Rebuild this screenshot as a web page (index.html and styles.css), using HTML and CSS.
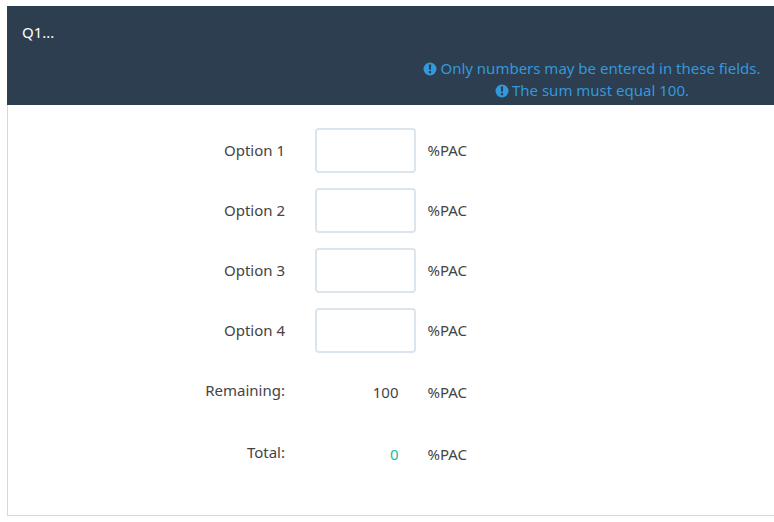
FILE: index.html
```html
<!DOCTYPE html>
<html lang="en">
<head>
<meta charset="utf-8">
<title>Question</title>
<link rel="stylesheet" href="styles.css">
</head>
<body>
<section class="question">
  <header class="head">
    <div class="title">Q1...</div>
    <div class="tips">
      <div class="tip"><svg class="icon" viewBox="0 0 14 14"><circle cx="7" cy="7" r="6.5"/><path d="M5.8 2.4h2.4l-.3 5.4H6.1zM5.9 9h2.2v2.3H5.9z"/></svg>Only numbers may be entered in these fields.</div>
      <div class="tip"><svg class="icon" viewBox="0 0 14 14"><circle cx="7" cy="7" r="6.5"/><path d="M5.8 2.4h2.4l-.3 5.4H6.1zM5.9 9h2.2v2.3H5.9z"/></svg>The sum must equal 100.</div>
    </div>
  </header>
  <div class="answers">
    <div class="row"><label class="label" for="a1">Option 1</label><input class="field" id="a1" type="text"><span class="unit">%PAC</span></div>
    <div class="row"><label class="label" for="a2">Option 2</label><input class="field" id="a2" type="text"><span class="unit">%PAC</span></div>
    <div class="row"><label class="label" for="a3">Option 3</label><input class="field" id="a3" type="text"><span class="unit">%PAC</span></div>
    <div class="row"><label class="label" for="a4">Option 4</label><input class="field" id="a4" type="text"><span class="unit">%PAC</span></div>
    <div class="row sum"><span class="label">Remaining:</span><span class="value">100</span><span class="unit">%PAC</span></div>
    <div class="row sum"><span class="label">Total:</span><span class="value good">0</span><span class="unit">%PAC</span></div>
  </div>
</section>
</body>
</html>
```
FILE: styles.css
```css
* { box-sizing: border-box; }
body {
  margin: 0;
  background: #fff;
  color: #444;
  font: 15px/22px "Noto Sans", sans-serif;
  overflow: hidden;
}
.question {
  margin: 6px 0 0 7px;
  height: 510px;
  border: solid #d8d8d8;
  border-width: 0 0 1px 1px;
}
.head {
  height: 99px;
  margin-left: -1px;
  padding: 15px 13px 0 15px;
  background: #2d3e50;
  color: #fff;
}
.tips {
  width: 338px;
  margin: 14px 0 0 auto;
  color: #3498db;
  text-align: center;
  white-space: nowrap;
}
.tip { display: flex; justify-content: center; align-items: center; }
.icon { width: 14px; height: 14px; margin: 1px 3px 0 0; }
.icon circle { fill: #3498db; }
.icon path { fill: #2d3e50; }
.answers { padding-top: 23px; }
.row {
  display: grid;
  grid-template-columns: 277px 101px 100px;
  align-items: center;
  height: 45px;
  margin-bottom: 15px;
}
.label { text-align: right; }
.field {
  width: 101px;
  height: 45px;
  margin-left: 30px;
  border: 2px solid #dce4ec;
  border-radius: 4px;
  background: #fff;
  font: inherit;
}
.label, .unit, .value { padding-bottom: 2px; }
.unit { margin-left: 41.5px; }
.sum { margin-bottom: 17px; }
.value { width: 113.5px; text-align: right; }
.sum .value, .sum .unit { padding: 2px 0 0; }
.good { color: #18bc9c; }
```
